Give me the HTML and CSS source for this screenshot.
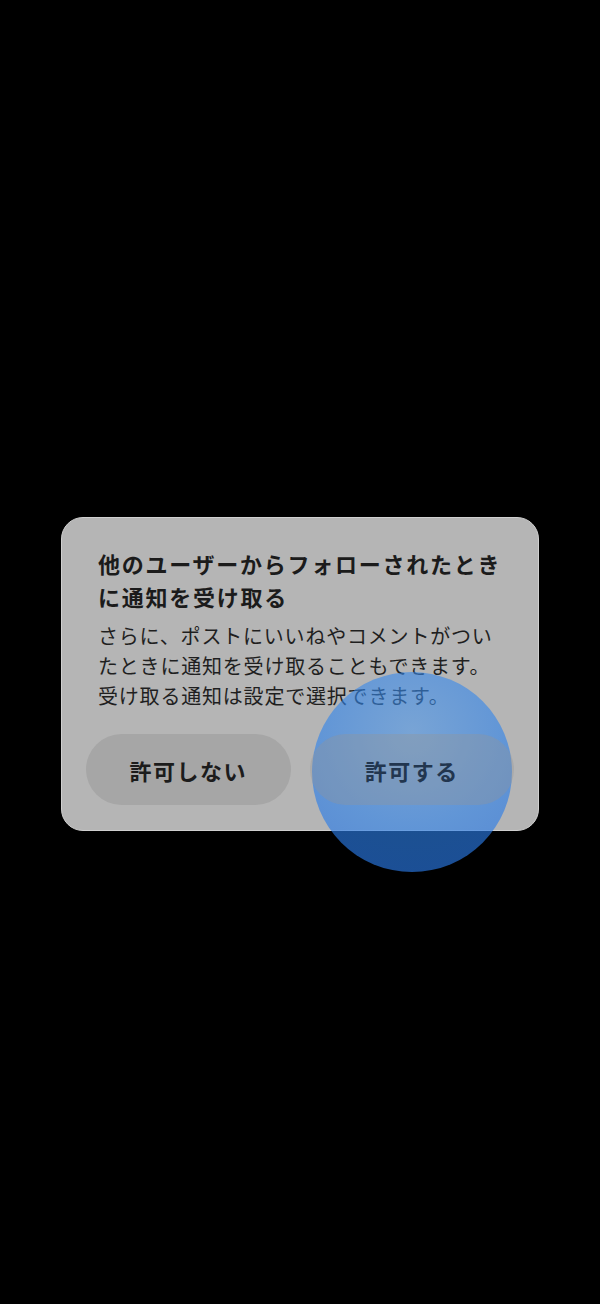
FILE: index.html
```html
<!DOCTYPE html>
<html lang="ja">
<head>
<meta charset="utf-8">
<link rel="stylesheet" href="styles.css">
</head>
<body>
<div class="screen">
  <div class="dialog">
    <h1 class="title">他のユーザーからフォローされたときに通知を受け取る</h1>
    <p class="body">さらに、ポストにいいねやコメントがついたときに通知を受け取ることもできます。受け取る通知は設定で選択できます。</p>
    <div class="actions">
      <button class="btn deny">許可しない</button>
      <button class="btn allow">許可する</button>
    </div>
    <div class="ripple"></div>
  </div>
</div>
</body>
</html>
```
FILE: styles.css
```css
html, body {
  margin: 0;
  padding: 0;
  background: #000;
}
.screen {
  width: 600px;
  height: 1304px;
  background: #000;
  padding-top: 517px;
  box-sizing: border-box;
  font-family: "Noto Sans CJK JP", "Noto Sans", sans-serif;
}
.dialog {
  position: relative;
  margin-left: 61px;
  width: 478px;
  height: 314px;
  box-sizing: border-box;
  background: #b5b5b5;
  border: 1px solid #cfcfcf;
  border-radius: 22px;
  padding: 29px 24px 24px 24px;
  display: flex;
  flex-direction: column;
}
.title {
  margin: 0 0 8px 12px;
  font-size: 22px;
  line-height: 33px;
  font-weight: 700;
  letter-spacing: 1.75px;
  color: #1b1b1b;
}
.body {
  margin: 0 14px 23px 12px;
  font-size: 20px;
  line-height: 30px;
  font-weight: 400;
  letter-spacing: 0.8px;
  color: #1f1f1f;
}
.actions {
  display: flex;
  gap: 19px;
}
.btn {
  flex: 1;
  height: 71px;
  border: none;
  border-radius: 36px;
  font-family: "Noto Sans CJK JP", "Noto Sans", sans-serif;
  font-size: 22px;
  font-weight: 700;
  letter-spacing: 1.5px;
  position: relative;
  z-index: 2;
}
.deny {
  background: #a6a6a6;
  color: #1c1c1c;
}
.allow {
  background: rgba(150, 150, 150, 0.35);
  color: #22364f;
}
.ripple {
  position: absolute;
  left: 250px;
  top: 154px;
  width: 200px;
  height: 200px;
  border-radius: 50%;
  background: radial-gradient(circle at 50% 30%, rgba(70, 150, 240, 0.55) 0%, rgba(45, 130, 235, 0.62) 55%, rgba(40, 115, 225, 0.68) 100%);
  z-index: 1;
}
```
